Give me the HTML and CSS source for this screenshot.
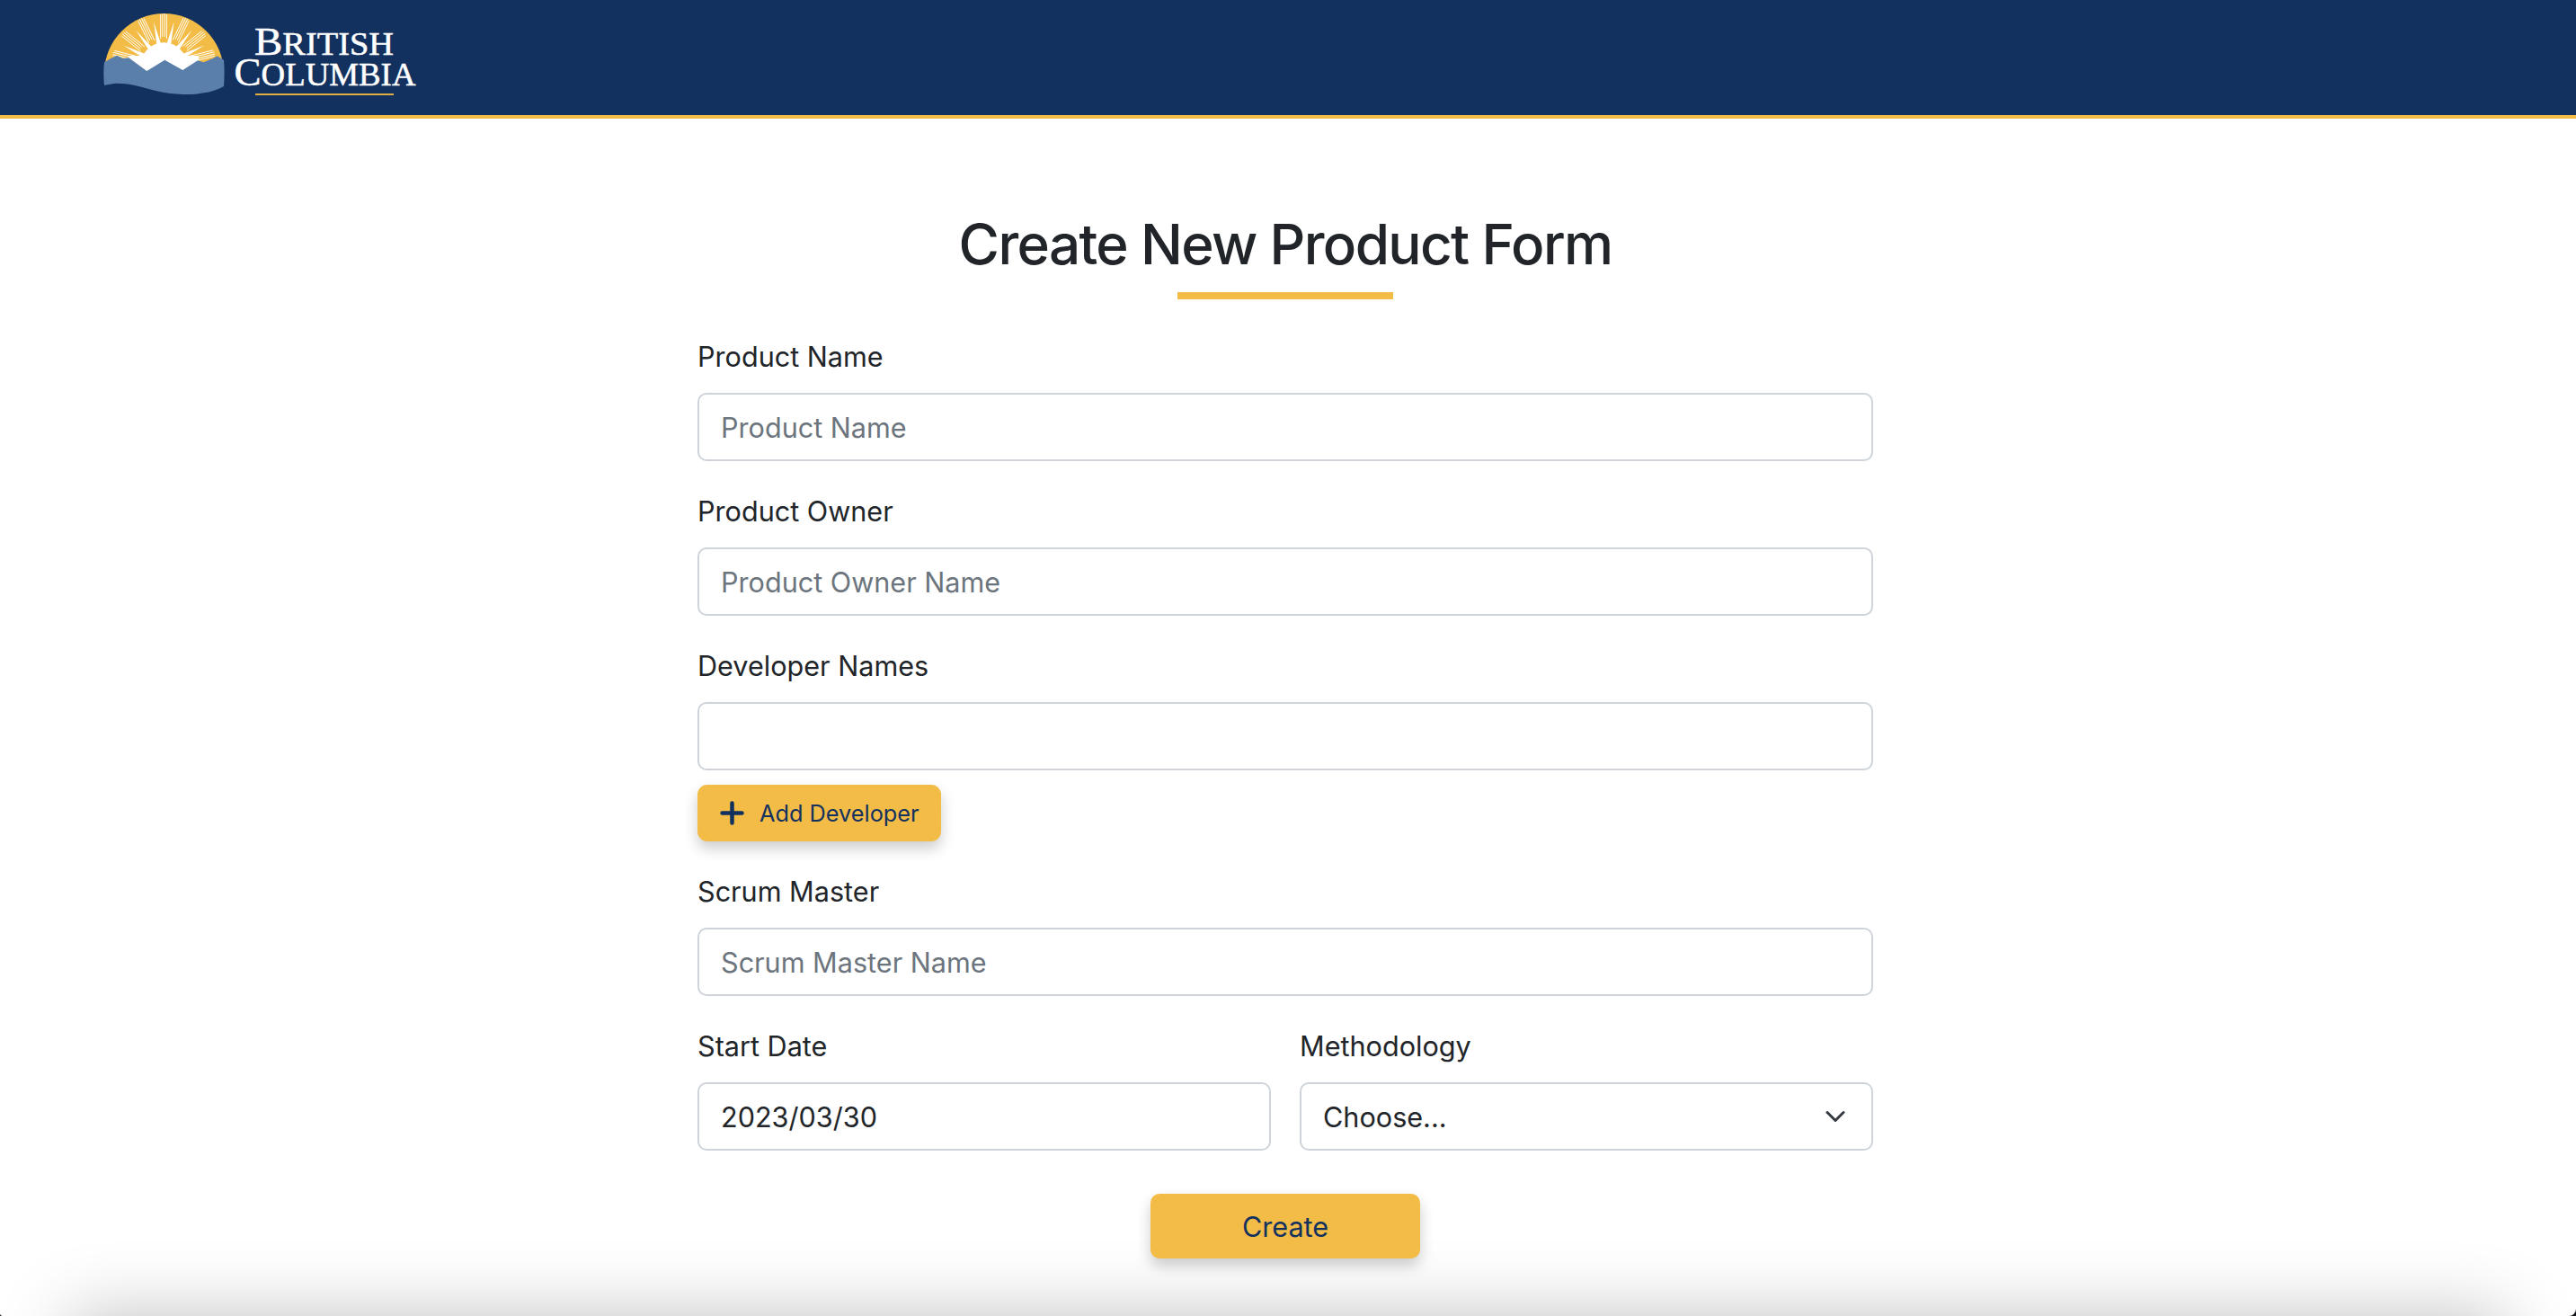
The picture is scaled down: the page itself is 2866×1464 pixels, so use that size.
FILE: index.html
```html
<!DOCTYPE html>
<html lang="en">
<head>
    <meta charset="UTF-8">
    <meta name="viewport" content="width=device-width, initial-scale=1.0">
    <title>Create New Product</title>
    <link rel="stylesheet" href="styles.css">
</head>
<body>
    <header class="site-header">
        <svg class="logo" viewBox="80 0 420 128" role="img" aria-label="British Columbia">
            <defs>
                <clipPath id="dome"><circle cx="182.5" cy="81.5" r="66.5"/></clipPath>
                <path id="rays-fine" d="M178.6 16V43M180.8 15V41M183.2 15V41M185.4 16V43"/>
                <polygon id="ray-spike" points="179.8,50 184.8,50 182.3,23"/>
            </defs>
            <g clip-path="url(#dome)">
                <rect x="110" y="10" width="145" height="80" fill="#f2bc47"/>
                <g stroke="#fff" stroke-width="0.9" fill="none">
                    <use href="#rays-fine"/>
                    <use href="#rays-fine" transform="rotate(-26 182.3 73.3)"/>
                    <use href="#rays-fine" transform="rotate(26 182.3 73.3)"/>
                    <use href="#rays-fine" transform="rotate(-51 182.3 73.3)"/>
                    <use href="#rays-fine" transform="rotate(51 182.3 73.3)"/>
                    <use href="#rays-fine" transform="rotate(-76 182.3 73.3)"/>
                    <use href="#rays-fine" transform="rotate(76 182.3 73.3)"/>
                </g>
                <g fill="#fff">
                    <use href="#ray-spike" transform="rotate(-13 182.3 73.3)"/>
                    <use href="#ray-spike" transform="rotate(13 182.3 73.3)"/>
                    <use href="#ray-spike" transform="rotate(-38 182.3 73.3)"/>
                    <use href="#ray-spike" transform="rotate(38 182.3 73.3)"/>
                    <use href="#ray-spike" transform="rotate(-63 182.3 73.3)"/>
                    <use href="#ray-spike" transform="rotate(63 182.3 73.3)"/>
                    <circle cx="182.3" cy="73.3" r="26"/>
                    <rect x="143" y="62" width="78" height="20"/>
                </g>
            </g>
            <path fill="#5b7fab" d="M116 69.3L123.3 65L130 61.7L136.7 65L143.3 64.3L163.3 79L183.3 66.7L203.3 78L220 67.3L226.7 69.3L236.7 65L241.7 62.3L249 66.7C249.8 76 249.8 86 249 96C242 100 234 102.5 226.7 103.3C219 105 211 105.3 203.3 105C194 104.5 185 103.5 176.7 101.7C167 99.5 158 97 150 95C143 93.5 136 92.7 130 92.7C125 93 120 94 116 95C115.2 86 115.2 76 116 69.3Z"/>
            <text class="logo-text" x="283" y="61" textLength="155" lengthAdjust="spacingAndGlyphs"><tspan class="logo-cap">B</tspan>RITISH</text>
            <text class="logo-text" x="260.5" y="95" textLength="202" lengthAdjust="spacingAndGlyphs"><tspan class="logo-cap">C</tspan>OLUMBIA</text>
            <rect x="284" y="104" width="154" height="2" fill="#e0ae43"/>
        </svg>
    </header>

    <main class="page">
        <h1 class="form-title">Create New Product Form</h1>
        <form class="product-form">
            <div class="field">
                <label for="product-name">Product Name</label>
                <input type="text" id="product-name" placeholder="Product Name">
            </div>
            <div class="field">
                <label for="product-owner">Product Owner</label>
                <input type="text" id="product-owner" placeholder="Product Owner Name">
            </div>
            <div class="field">
                <label for="developer-names">Developer Names</label>
                <input type="text" id="developer-names">
                <button type="button" class="btn btn-add">
                    <svg class="plus-icon" viewBox="0 0 27 27"><path d="M13.5 2.5V24.5M2.5 13.5H24.5"/></svg>
                    Add Developer
                </button>
            </div>
            <div class="field">
                <label for="scrum-master">Scrum Master</label>
                <input type="text" id="scrum-master" placeholder="Scrum Master Name">
            </div>
            <div class="field-row">
                <div class="field">
                    <label for="start-date">Start Date</label>
                    <input type="text" id="start-date" value="2023/03/30">
                </div>
                <div class="field">
                    <label for="methodology">Methodology</label>
                    <div class="select-box" id="methodology">
                        <span>Choose...</span>
                        <svg class="chevron" viewBox="0 0 16 16"><path d="M2 5L8 11L14 5"/></svg>
                    </div>
                </div>
            </div>
            <div class="form-actions">
                <button type="button" class="btn btn-create">Create</button>
            </div>
        </form>
    </main>
</body>
</html>
```

FILE: styles.css
```css
html {
    background-color: #14141c; /* shows in the window corners */
}

body {
    margin: 0;
    height: 1464px;
    overflow: hidden;
    border-radius: 0 0 8px 3px;
    background-color: #fff;
    color: #212529;
    font-family: Inter, "Noto Sans", sans-serif;
    font-size: 30.6px;
}

.site-header {
    height: 128px;
    background-color: #13315f;
    border-bottom: 4px solid #f2bc47;
    padding-left: 80px;
}

.logo {
    display: block;
    width: 420px;
    height: 128px;
}

.logo-text {
    fill: #fff;
    stroke: #fff;
    stroke-width: 0.5;
    font-family: "Liberation Serif", serif;
    font-size: 36px;
}

.logo-cap {
    font-size: 44px;
}

.page {
    position: relative;
    z-index: 0;
    box-sizing: border-box;
    height: 1332px;
    padding-right: 6px;
    overflow: hidden;
}

/* footer shadow coming up from below the fold */
.page::after {
    content: "";
    position: absolute;
    z-index: -1;
    top: 100%;
    left: 78px;
    right: 78px;
    height: 100px;
    box-shadow: 0 0 80px rgba(0, 0, 0, 0.25);
}

.form-title {
    margin: 0;
    padding-top: 104px;
    font-size: 62px;
    font-weight: 500;
    letter-spacing: -1.65px;
    line-height: 72px;
    text-align: center;
}

.form-title::after {
    content: "";
    display: block;
    width: 240px;
    height: 8px;
    margin: 17px auto 0;
    background-color: #f2bc47;
}

.product-form {
    width: 1308px;
    margin: 42px auto 0;
}

.field {
    margin-bottom: 34px;
}

.field label {
    display: block;
    margin-bottom: 18px;
    line-height: 44px;
}

.field input,
.select-box {
    display: block;
    box-sizing: border-box;
    width: 100%;
    height: 76px;
    padding: 0 24px;
    border: 2px solid #ced4da;
    border-radius: 10px;
    background-color: #fff;
    color: #212529;
    font-family: inherit;
    font-size: 30.6px;
    outline: none;
}

.field input::placeholder {
    color: #6c757d;
    opacity: 1;
}

.select-box {
    display: flex;
    align-items: center;
    justify-content: space-between;
}

.chevron {
    width: 24px;
    height: 24px;
    margin-right: 4px;
    fill: none;
    stroke: #343a40;
    stroke-width: 2;
    stroke-linecap: round;
    stroke-linejoin: round;
}

.field-row {
    display: grid;
    grid-template-columns: 1fr 1fr;
    column-gap: 32px;
}

.btn {
    border: none;
    background-color: #f2bc47;
    color: #13315f;
    font-family: inherit;
    cursor: pointer;
    box-shadow: 0 8px 16px rgba(0, 0, 0, 0.2);
}

.btn-add {
    display: flex;
    align-items: center;
    gap: 17px;
    width: 271px;
    height: 63px;
    margin-top: 16px;
    padding: 0 0 0 25px;
    border-radius: 11px;
    font-size: 25.3px;
}

.plus-icon {
    width: 27px;
    height: 27px;
    fill: none;
    stroke: #13315f;
    stroke-width: 4.5;
    stroke-linecap: round;
}

.form-actions {
    display: flex;
    justify-content: center;
    margin-top: 14px;
}

.btn-create {
    width: 300px;
    height: 72px;
    border-radius: 10px;
    font-size: 30.6px;
}
```
